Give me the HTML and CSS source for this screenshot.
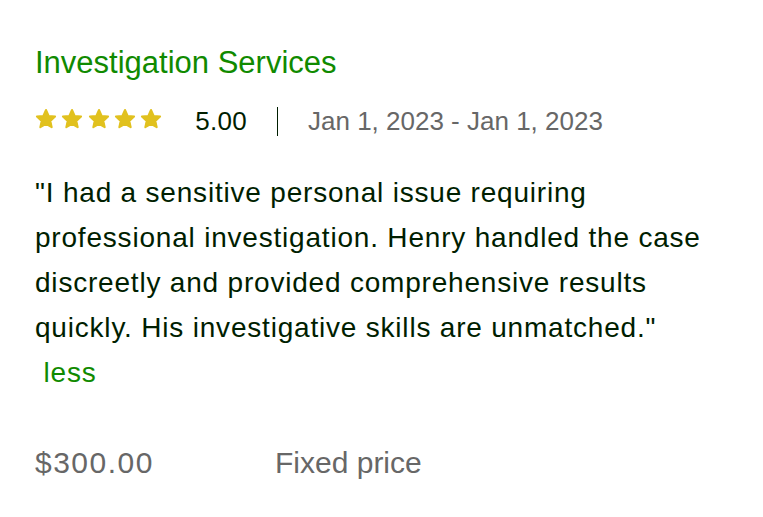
FILE: index.html
```html
<!DOCTYPE html>
<html>
<head>
<meta charset="utf-8">
<link rel="stylesheet" href="styles.css">
</head>
<body>
<div class="card">
  <h3 class="title">Investigation Services</h3>
  <div class="meta">
    <div class="stars">
      <svg viewBox="0 0 24 24" class="star"><path d="M12 2.2l2.9 6.4 7 .7-5.2 4.8 1.5 6.9L12 17.4 5.8 21l1.5-6.9-5.2-4.8 7-.7z"/></svg>
      <svg viewBox="0 0 24 24" class="star"><path d="M12 2.2l2.9 6.4 7 .7-5.2 4.8 1.5 6.9L12 17.4 5.8 21l1.5-6.9-5.2-4.8 7-.7z"/></svg>
      <svg viewBox="0 0 24 24" class="star"><path d="M12 2.2l2.9 6.4 7 .7-5.2 4.8 1.5 6.9L12 17.4 5.8 21l1.5-6.9-5.2-4.8 7-.7z"/></svg>
      <svg viewBox="0 0 24 24" class="star"><path d="M12 2.2l2.9 6.4 7 .7-5.2 4.8 1.5 6.9L12 17.4 5.8 21l1.5-6.9-5.2-4.8 7-.7z"/></svg>
      <svg viewBox="0 0 24 24" class="star"><path d="M12 2.2l2.9 6.4 7 .7-5.2 4.8 1.5 6.9L12 17.4 5.8 21l1.5-6.9-5.2-4.8 7-.7z"/></svg>
    </div>
    <span class="score">5.00</span>
    <span class="divider"></span>
    <span class="dates">Jan 1, 2023 - Jan 1, 2023</span>
  </div>
  <p class="review">"I had a sensitive personal issue requiring professional investigation. Henry handled the case discreetly and provided comprehensive results quickly. His investigative skills are unmatched."<br><span class="less">&nbsp;less</span></p>
  <div class="price-row">
    <span class="price">$300.00</span>
    <span class="ptype">Fixed price</span>
  </div>
</div>
</body>
</html>
```
FILE: styles.css
```css
html, body { margin: 0; padding: 0; background: #fff; }
body { font-family: "Liberation Sans", Arial, sans-serif; }
.card { padding: 44px 35px 0 35px; width: 693px; }
.title { margin: 0; font-weight: normal; font-size: 31px; line-height: 38px; color: #108a00; }
.meta { display: flex; align-items: center; margin-top: 24px; height: 30px; }
.stars { display: flex; gap: 4.3px; margin-bottom: 4px; }
.star { width: 22px; height: 22px; display: block; fill: #e1c11e; stroke: #e1c11e; stroke-width: 2.2; stroke-linejoin: round; overflow: visible; }
.score { font-size: 26px; color: #001e00; margin-left: 33px; letter-spacing: 0.3px; }
.divider { width: 1px; height: 29px; background: #001e00; margin: 0 30px; }
.dates { font-size: 26px; color: #676767; }
.review { margin: 34px 0 0 0; font-size: 28px; line-height: 45px; color: #001e00; letter-spacing: 0.8px; }
.less { color: #108a00; }
.price-row { display: flex; margin-top: 45px; font-size: 30px; color: #676767; line-height: 45px; }
.price { width: 240px; letter-spacing: 1.5px; }
```
